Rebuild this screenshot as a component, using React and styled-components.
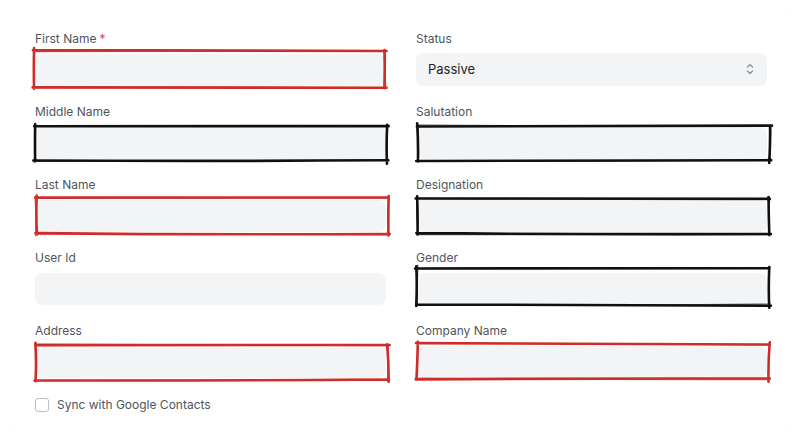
import React from 'react';
import styled, { createGlobalStyle } from 'styled-components';

const GlobalStyle = createGlobalStyle`
  body {
    margin: 0;
    background: #ffffff;
    font-family: Inter, "Noto Sans", sans-serif;
  }
`;

const Page = styled.div`
  width: 802px;
  height: 444px;
  padding: 10px;
  box-sizing: border-box;
`;

const Card = styled.div`
  height: 100%;
  box-sizing: border-box;
  border-radius: 10px;
  background: #fff;
  box-shadow: 0 0 1px rgba(0, 0, 0, 0.05);
  padding: 21px 25px 20px 25px;
`;

const Grid = styled.div`
  display: grid;
  grid-template-columns: 351px 351px;
  column-gap: 30px;
  row-gap: 18px;
`;

const Field = styled.div`
  display: flex;
  flex-direction: column;
`;

const Label = styled.label`
  font-size: 12px;
  line-height: 16px;
  color: #50555d;
  margin-bottom: 7px;
`;

const Required = styled.span`
  color: #e24a4a;
  margin-left: 3px;
`;

const InputBox = styled.div`
  position: relative;
  height: 32px;
  border-radius: 7px;
  background: #f3f4f6;
  display: flex;
  align-items: center;
  padding: 0 12px;
  font-size: 13px;
  color: #1f2328;
`;

const SelectBox = styled(InputBox)`
  justify-content: space-between;
  height: 33px;
  margin-top: -1px;
  padding-bottom: 1px;
  box-sizing: border-box;
`;

const Sketch = styled.svg`
  position: absolute;
  left: ${(p) => p.$dx - 3}px;
  top: ${(p) => p.$dy - 4}px;
  overflow: visible;
  pointer-events: none;
`;

const CheckRow = styled.div`
  display: flex;
  align-items: center;
  gap: 8px;
  margin-top: 19px;
  font-size: 12px;
  color: #50555d;
`;

const Checkbox = styled.span`
  width: 12px;
  height: 12px;
  border: 1px solid #b9bec6;
  border-radius: 3px;
  background: #fff;
`;

function rng(seed) {
  let t = seed;
  return () => {
    t += 0x6d2b79f5;
    let r = Math.imul(t ^ (t >>> 15), 1 | t);
    r ^= r + Math.imul(r ^ (r >>> 7), 61 | r);
    return ((r ^ (r >>> 14)) >>> 0) / 4294967296;
  };
}

function roughRect(w, h, seed) {
  const rand = rng(seed);
  const j = (a) => (rand() - 0.5) * a;
  const x0 = 3, y0 = 4, x1 = w + 3, y1 = h + 4;
  const line = (ax, ay, bx, by, amt) => {
    const mx = (ax + bx) / 2 + j(amt);
    const my = (ay + by) / 2 + j(amt);
    return `M${ax + j(2)} ${ay + j(2)} Q${mx} ${my} ${bx + j(2)} ${by + j(2)}`;
  };
  return [
    line(x0 - 1, y0, x1 + 1, y0, 2),
    line(x1, y0 - 1, x1, y1 + 2, 2),
    line(x1 + 1, y1, x0 - 1, y1, 2),
    line(x0, y1 + 1, x0, y0 - 2, 2),
  ].join(' ');
}

function SketchOutline({ color, seed, w = 351, h = 34, dx = 0, dy = 0 }) {
  const d = roughRect(w, h, seed);
  const d2 = roughRect(w, h, seed + 7);
  return (
    <Sketch $dx={dx} $dy={dy} width={w + 6} height={h + 8}>
      <path d={d} fill="none" stroke={color} strokeWidth="2.6" strokeLinecap="round" />
      <path d={d2} fill="none" stroke={color} strokeWidth="1.2" strokeLinecap="round" opacity="0.7" />
    </Sketch>
  );
}

const RED = '#cf2c2c';
const BLACK = '#111111';

const fields = [
  { label: 'First Name', required: true, sketch: { color: RED, seed: 3, dx: -1, dy: -3, h: 36 } },
  { label: 'Status', select: 'Passive' },
  { label: 'Middle Name', sketch: { color: BLACK, seed: 11, dx: 0, dy: -1, w: 352, h: 35 } },
  { label: 'Salutation', sketch: { color: BLACK, seed: 19, dx: 2, dy: -1, w: 352, h: 35 } },
  { label: 'Last Name', sketch: { color: RED, seed: 23, dx: 1, dy: -2, w: 352, h: 36 } },
  { label: 'Designation', sketch: { color: BLACK, seed: 29, dx: 1, dy: -1, w: 352, h: 35 } },
  { label: 'User Id' },
  { label: 'Gender', sketch: { color: BLACK, seed: 37, dx: 1, dy: -5, w: 352, h: 37 } },
  { label: 'Address', sketch: { color: RED, seed: 41, dx: 1, dy: -1, w: 352, h: 35 } },
  { label: 'Company Name', sketch: { color: RED, seed: 43, dx: 1, dy: -2, w: 352, h: 35 } },
];

function UpDown() {
  return (
    <svg width="10" height="14" viewBox="0 0 10 14" fill="none" stroke="#8a8f98" strokeWidth="1.3" strokeLinecap="round" strokeLinejoin="round">
      <path d="M2.5 5 5 2.5 7.5 5" />
      <path d="M2.5 9 5 11.5 7.5 9" />
    </svg>
  );
}

export default function App() {
  return (
    <Page>
      <GlobalStyle />
      <Card>
        <Grid>
          {fields.map((f) => (
            <Field key={f.label}>
              <Label>
                {f.label}
                {f.required && <Required>*</Required>}
              </Label>
              {f.select ? (
                <SelectBox>
                  <span>{f.select}</span>
                  <UpDown />
                </SelectBox>
              ) : (
                <InputBox>
                  {f.sketch && <SketchOutline {...f.sketch} />}
                </InputBox>
              )}
            </Field>
          ))}
        </Grid>
        <CheckRow>
          <Checkbox />
          <span>Sync with Google Contacts</span>
        </CheckRow>
      </Card>
    </Page>
  );
}
